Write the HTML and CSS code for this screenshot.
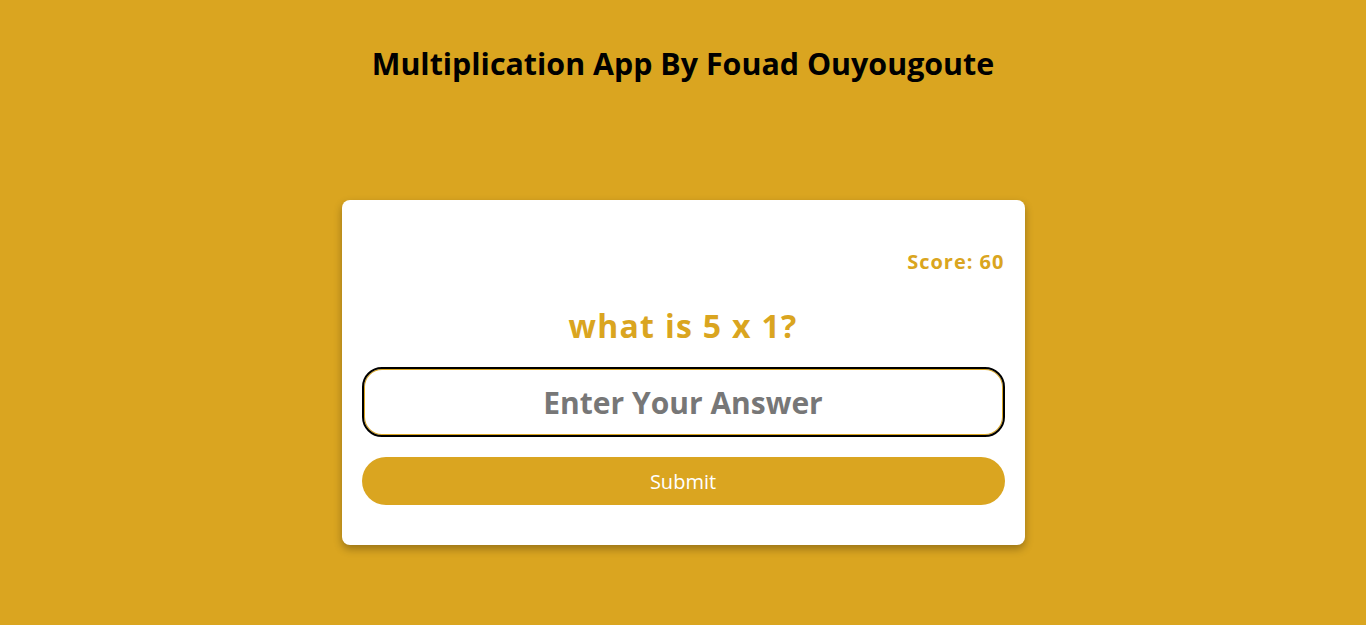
FILE: index.html
```html
<!DOCTYPE html>
<html lang="en">
<head>
<meta charset="utf-8">
<title>Multiplication App</title>
<link rel="stylesheet" href="styles.css">
</head>
<body>
<h1 class="title">Multiplication App By Fouad Ouyougoute</h1>
<main class="page">
  <form class="card" onsubmit="return false">
    <p class="score">Score: 60</p>
    <h2 class="question">what is 5 x 1?</h2>
    <input class="answer" type="text" placeholder="Enter Your Answer" autofocus>
    <button class="submit" type="submit">Submit</button>
  </form>
</main>
</body>
</html>
```
FILE: styles.css
```css
* { box-sizing: border-box; }
html, body { margin: 0; padding: 0; }
body {
  background: #daa520;
  font-family: "Comic Sans MS", "Open Sans", "DejaVu Sans", sans-serif;
  height: 625px;
  overflow: hidden;
}
.title {
  margin: 0;
  padding-top: 44px;
  text-align: center;
  font-size: 30.4px;
  line-height: 40px;
  font-weight: 700;
  color: #000;
}
.page {
  display: flex;
  justify-content: center;
  padding-top: 116px;
}
.card {
  width: 683px;
  background: #fff;
  border-radius: 8px;
  box-shadow: 0 4px 8px rgba(0,0,0,0.3);
  padding: 48px 20px 40px;
  display: flex;
  flex-direction: column;
}
.score {
  margin: 0;
  text-align: right;
  color: #daa520;
  font-weight: 700;
  font-size: 20px;
  line-height: 28px;
  letter-spacing: 1px;
}
.question {
  margin: 30px 0 21px;
  text-align: center;
  color: #daa520;
  font-size: 32px;
  line-height: 40px;
  font-weight: 700;
  letter-spacing: 1.3px;
}
.answer {
  height: 70px;
  width: 100%;
  border: 2px solid #000;
  border-radius: 20px;
  box-shadow: inset 0 0 0 1px #daa520;
  text-align: center;
  font-family: inherit;
  font-size: 30px;
  font-weight: 700;
  color: #333;
  caret-color: #b8860b;
  outline: none;
}
.answer::placeholder { color: #777; }
.submit {
  margin-top: 20px;
  height: 48px;
  width: 100%;
  border: none;
  border-radius: 24px;
  background: #daa520;
  color: #fff;
  font-family: inherit;
  font-size: 20px;
}
```
